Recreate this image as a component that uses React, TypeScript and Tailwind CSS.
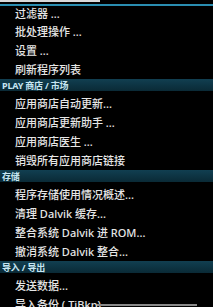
const sections: { title?: string; items: string[] }[] = [
  { items: ["过滤器 ...", "批处理操作 ...", "设置 ...", "刷新程序列表"] },
  {
    title: "PLAY 商店 / 市场",
    items: ["应用商店自动更新...", "应用商店更新助手 ...", "应用商店医生 ...", "销毁所有应用商店链接"],
  },
  {
    title: "存储",
    items: ["程序存储使用情况概述...", "清理 Dalvik 缓存...", "整合系统 Dalvik 进 ROM...", "撤消系统 Dalvik 整合..."],
  },
  { title: "导入 / 导出", items: ["发送数据...", "导入备份 ( TiBkp)"] },
];

const font = { fontFamily: '"Noto Sans", "Noto Sans CJK SC", sans-serif' };

export default function App() {
  return (
    <div className="relative w-[213px] h-[307px] overflow-hidden bg-black" style={font}>
      {/* tail of the element above */}
      <div className="h-[2px] w-[100px] bg-[#d8d8d8]" />
      <div className="h-[2px]" />
      <div className="h-[2px] bg-[#2a8db0]" />

      {sections.map((s, si) => (
        <div key={si}>
          {s.title && (
            <div className="pb-[3px]">
              <div className="h-[12px] flex items-center pl-[2px] bg-gradient-to-b from-[#113f51] to-[#0a2a36] text-[9px] font-bold leading-none text-[#c6e6f2] tracking-[-0.2px]">
                {s.title}
              </div>
            </div>
          )}
          {s.items.map((item, i) => (
            <div
              key={item}
              className={`${si === 0 && i === 0 ? "h-[16px] items-start pt-[1px]" : "h-[19px] items-center"} flex pl-[15px] text-[11px] font-medium leading-[14px] text-[#e6e6e6] whitespace-nowrap`}
            >
              {item}
            </div>
          ))}
        </div>
      ))}

      {/* top edge of the overlay below */}
      <div className="absolute left-[97px] top-[304px] w-[100px] h-[2px] bg-[#8a8a8a]" />
    </div>
  );
}
